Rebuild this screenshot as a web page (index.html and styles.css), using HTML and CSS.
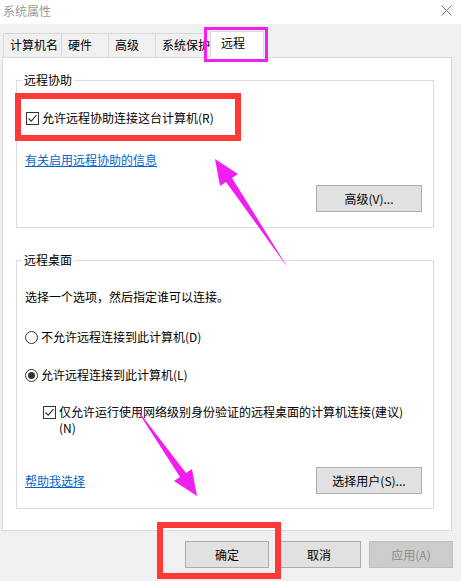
FILE: index.html
```html
<!DOCTYPE html>
<html lang="zh-CN">
  <head>
    <meta charset="utf-8" />
    <meta name="viewport" content="width=device-width, initial-scale=1.0" />
    <link rel="stylesheet" href="styles.css">
  </head>
  <body>
    <div class="window">
      <div class="titlebar">
        <span class="title">系统属性</span>
        <svg class="close" width="11" height="11" viewBox="0 0 11 11">
          <path d="M0.5 0.5 L10.5 10.5 M10.5 0.5 L0.5 10.5" stroke="#7a7a7a" stroke-width="1" fill="none" />
        </svg>
      </div>

      <div class="tabs">
        <div class="tab tab-name">计算机名</div>
        <div class="tab tab-hw">硬件</div>
        <div class="tab tab-adv">高级</div>
        <div class="tab tab-prot">系统保护</div>
        <div class="tab tab-remote active">远程</div>
      </div>

      <div class="panel">
        <fieldset class="group assist">
          <legend>远程协助</legend>
          <label class="check-row first">
            <svg class="box" width="13" height="13" viewBox="0 0 13 13">
              <rect x="0.5" y="0.5" width="12" height="12" fill="#fff" stroke="#333" />
              <path d="M2.5 6.5 L5.2 9.2 L10.5 3.2" stroke="#333" stroke-width="1.1" fill="none" />
            </svg>
            <span>允许远程协助连接这台计算机(R)</span>
          </label>
          <a class="link info" href="#">有关启用远程协助的信息</a>
          <div class="row-end">
            <button class="btn">高级(V)...</button>
          </div>
        </fieldset>

        <fieldset class="group desktop">
          <legend>远程桌面</legend>
          <p class="intro">选择一个选项，然后指定谁可以连接。</p>
          <label class="check-row radio-off">
            <svg class="box" width="13" height="13" viewBox="0 0 13 13">
              <circle cx="6.5" cy="6.5" r="6" fill="#fff" stroke="#333" />
            </svg>
            <span>不允许远程连接到此计算机(D)</span>
          </label>
          <label class="check-row radio-on">
            <svg class="box" width="13" height="13" viewBox="0 0 13 13">
              <circle cx="6.5" cy="6.5" r="6" fill="#fff" stroke="#333" />
              <circle cx="6.5" cy="6.5" r="3.5" fill="#333" />
            </svg>
            <span>允许远程连接到此计算机(L)</span>
          </label>
          <label class="check-row nla">
            <svg class="box" width="13" height="13" viewBox="0 0 13 13">
              <rect x="0.5" y="0.5" width="12" height="12" fill="#fff" stroke="#333" />
              <path d="M2.5 6.5 L5.2 9.2 L10.5 3.2" stroke="#333" stroke-width="1.1" fill="none" />
            </svg>
            <span>仅允许运行使用网络级别身份验证的远程桌面的计算机连接(建议)<br>(N)</span>
          </label>
          <div class="row-split">
            <a class="link" href="#">帮助我选择</a>
            <button class="btn">选择用户(S)...</button>
          </div>
        </fieldset>
      </div>

      <div class="actions">
        <button class="btn btn-dlg">确定</button>
        <button class="btn btn-dlg">取消</button>
        <button class="btn btn-dlg" disabled>应用(A)</button>
      </div>

      <!-- annotation marks drawn over the dialog -->
      <svg class="marks" width="461" height="581" viewBox="0 0 461 581">
        <rect x="205.5" y="28.5" width="61" height="32" fill="none" stroke="#f01ff0" stroke-width="3" />
        <rect x="18" y="96" width="220" height="42" fill="none" stroke="#ff3838" stroke-width="6" />
        <rect x="160" y="525" width="118" height="51" fill="none" stroke="#ff3838" stroke-width="6" />
        <polygon points="215,159 238,174 232,178 288,268 226,182 220,186" fill="#f01ff0" />
        <polygon points="197,496 174,481 180,477 133,404 186,473 192,469" fill="#f01ff0" />
      </svg>
    </div>
  </body>
</html>
```

FILE: styles.css
```css
html,
body {
  margin: 0;
  padding: 0;
  background-color: #f0f0f0;
}
body {
  color: #000;
  font: 12px/16px "Noto Sans CJK SC", "Noto Sans", sans-serif;
}
.window {
  position: relative;
  width: 461px;
  height: 581px;
  overflow: hidden;
}
.titlebar {
  height: 24px;
  background: #ffffff;
  display: flex;
  align-items: center;
  justify-content: space-between;
  padding: 0 9px 2px 3px;
  box-sizing: border-box;
}
.title {
  color: #9a9a9a;
}
.close {
  margin-top: -2px;
}
.tabs {
  height: 26px;
  margin-top: 7px;
  padding-left: 3px;
  display: flex;
  align-items: flex-end;
  position: relative;
  z-index: 1;
}
.tab {
  height: 24px;
  box-sizing: border-box;
  padding: 3px 0 0 6px;
  border: 1px solid #d9d9d9;
  border-right: none;
  border-bottom: none;
  background: #f0f0f0;
}
.tab-name {
  width: 58px;
}
.tab-hw,
.tab-adv {
  width: 47px;
}
.tab-prot {
  width: 55px;
}
.tab.active {
  width: 54px;
  height: 27px;
  margin-bottom: -1px;
  padding: 3px 0 0 10px;
  background: #ffffff;
  border-right: 1px solid #d9d9d9;
}
.panel {
  margin-left: 2px;
  width: 450px;
  height: 474px;
  box-sizing: border-box;
  background: #ffffff;
  border: 1px solid #d9d9d9;
  padding-top: 14px;
}
.group {
  margin: 0 17px 0 13px;
  padding: 0 11px 0 8px;
  border: 1px solid #dcdcdc;
  min-width: 0;
}
.group legend {
  margin-left: -3px;
  padding: 0 2px;
  line-height: 16px;
}
.desktop {
  margin-top: 24px;
  padding-bottom: 14px;
}
.assist {
  padding-bottom: 15px;
}
.check-row {
  display: flex;
  align-items: flex-start;
  gap: 3px;
}
.check-row .box {
  flex: none;
  margin-top: 2px;
}
.assist .first {
  margin-top: 22px;
  padding-left: 1px;
}
.link {
  display: inline-block;
  color: #0066cc;
  text-decoration: underline;
}
.info {
  margin-top: 26px;
}
.row-end {
  display: flex;
  justify-content: flex-end;
  margin-top: 17px;
}
.btn {
  font: inherit;
  color: #000;
  background: #e1e1e1;
  border: 1px solid #adadad;
  border-radius: 0;
  width: 106px;
  height: 27px;
  padding: 0;
  cursor: pointer;
}
.intro {
  margin: 21px 0 0;
}
.radio-off {
  margin-top: 24px;
}
.radio-on {
  margin-top: 22px;
}
.nla {
  margin-top: 21px;
  padding-left: 18px;
}
.row-split {
  display: flex;
  justify-content: space-between;
  align-items: center;
  margin-top: 31px;
}
.actions {
  display: flex;
  justify-content: flex-end;
  gap: 8px;
  margin: 10px 8px 0 0;
}
.btn-dlg {
  width: 84px;
}
.btn-dlg:disabled {
  background: #cccccc;
  border-color: #bfbfbf;
  color: #8d8d8d;
  cursor: default;
}
.marks {
  position: absolute;
  left: 0;
  top: 0;
  pointer-events: none;
  z-index: 2;
}
```
